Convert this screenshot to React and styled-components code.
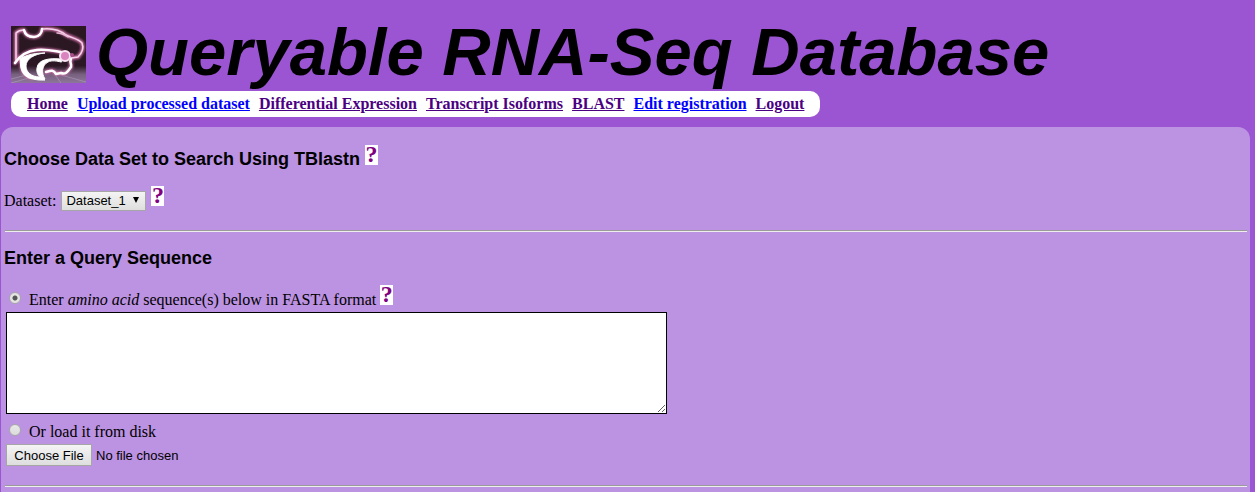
import React from "react";
import styled, { createGlobalStyle } from "styled-components";

const Global = createGlobalStyle`
  * { box-sizing: border-box; }
  html { background: #9b55d3; }
  body {
    margin: 0;
    background: #9b55d3;
    color: #000;
    font: 16px/20px "Liberation Serif", serif;
  }
`;

const Page = styled.div`
  min-height: 100vh;
  display: flex;
  flex-direction: column;
  padding: 13px 5px 0 1px;
  overflow: hidden;
`;

const Header = styled.header`
  display: flex;
  flex-direction: column;
  align-items: flex-start;
  padding-left: 10px;
`;

const Brand = styled.div`
  display: flex;
  align-items: flex-end;
  gap: 10px;
  height: 78px;
`;

const Logo = styled.svg`
  width: 75px;
  height: 57px;
  margin-bottom: 8px;
`;

const Title = styled.h1`
  margin: 0;
  font: italic bold 67px/78px "Liberation Sans", sans-serif;
  white-space: nowrap;
`;

const Nav = styled.nav`
  display: flex;
  gap: 9px;
  padding: 3px 16px;
  border-radius: 10px;
  background: #fff;
  font-weight: bold;
  white-space: nowrap;
`;

const NavLink = styled.a`
  color: ${(p) => (p.$visited ? "#4b0082" : "#0000ff")};
  text-decoration: underline;
`;

const Panel = styled.main`
  flex: 1;
  margin-top: 10px;
  padding: 18px 3px 0;
  border-radius: 12px 12px 0 0;
  background: #bc92e2;
`;

const Heading = styled.h2`
  margin: 0;
  font: bold 18px/20px "Liberation Sans", sans-serif;
`;

const Row = styled.div`
  display: flex;
  align-items: flex-end;
  gap: ${(p) => p.$gap || 0}px;
  margin-top: ${(p) => p.$top || 0}px;
`;

const Help = styled.button`
  width: 13px;
  height: 20px;
  margin-bottom: ${(p) => (p.$inHeading ? 4 : 5)}px;
  padding: 0 0 1px;
  border: 0;
  background: #fff;
  color: #800080;
  font: bold 24px/19px "Liberation Serif", serif;
  text-align: center;
  cursor: help;
`;

const SelectWrap = styled.span`
  position: relative;
  display: inline-flex;
`;

const Select = styled.select`
  appearance: none;
  width: 85px;
  height: 20px;
  padding: 0 4px;
  border: 1px solid #a6a6a6;
  border-radius: 0;
  background: linear-gradient(#f4f4f4, #dedede);
  color: #000;
  font: 13px/18px "Liberation Sans", sans-serif;
`;

const Arrow = styled.svg`
  position: absolute;
  top: 6px;
  right: 7px;
  width: 6px;
  height: 7px;
  pointer-events: none;
`;

const Rule = styled.hr`
  height: 2px;
  margin: ${(p) => p.$top}px 0 0 1px;
  border: 0;
  border-top: 1px solid #9a9a9a;
  border-bottom: 1px solid #eee;
`;

const Radio = styled.input`
  appearance: none;
  width: 12px;
  height: 12px;
  margin: 0 8px 6px 5px;
  border: 1px solid #a8a8a8;
  border-radius: 50%;
  background: linear-gradient(#e8e8e8, #dcdcdc);
  &:checked {
    background: radial-gradient(circle, #555 0 2px, #e4e4e4 3px);
  }
`;

const RadioLabel = styled.label`
  margin-right: 4px;
`;

const Sequence = styled.textarea`
  display: block;
  width: 661px;
  max-width: 100%;
  height: 102px;
  margin: 2px 0 0 2px;
  padding: 2px;
  border: 1px solid #000;
  background: #fff;
  font: 13px/15px "Liberation Mono", monospace;
  resize: both;
`;

const FileInput = styled.input`
  display: block;
  height: 22px;
  margin: 2px 0 0 2px;
  color: #000;
  font: 13px/22px "Liberation Sans", sans-serif;
  &::file-selector-button {
    width: 86px;
    height: 22px;
    margin: 0 4px 0 0;
    padding: 1px 0 0;
    border: 1px solid #a6a6a6;
    border-radius: 0;
    background: linear-gradient(#f4f4f4, #dedede);
    color: #000;
    font: 13px/20px "Liberation Sans", sans-serif;
  }
`;

const links = [
  ["Home", true],
  ["Upload processed dataset", false],
  ["Differential Expression", true],
  ["Transcript Isoforms", true],
  ["BLAST", true],
  ["Edit registration", false],
  ["Logout", true],
];

const HelpButton = ({ topic, inHeading }) => (
  <Help type="button" $inHeading={inHeading} aria-label={`Help: ${topic}`}>?</Help>
);

const head =
  "M5 36V7C7 5 10 4 13 4C14 9 18 11 23 11C28 11 31 7 31 3C40 2 49 4 55 9C61 12 68 13 71 17C73 22 71 27 67 31L60 32";
const neck =
  "M4 37C8 31 15 25 26 24C35 23 43 25 50 26M12 32C8 41 12 50 21 52";
const jaw =
  "M60 33C58 36 61 38 60 41C57 45 55 49 50 47L45 48C42 43 39 45 35 46";
const curl =
  "M9 33C16 28 26 27 34 27C23 28 15 33 15 40C15 46 20 51 29 51L34 54C17 55 9 48 9 33Z M50 33C39 32 27 33 26 42C25 47 28 52 34 53C30 47 31 39 37 36C41 34 46 35 50 36Z";

const WildcatLogo = () => (
  <Logo viewBox="0 0 75 57" role="img" aria-label="Wildcat logo">
    <defs>
      <linearGradient id="floor" x1="0" y1="0" x2="0" y2="1">
        <stop offset="0" stopColor="#2b1720" />
        <stop offset="0.7" stopColor="#2c1825" />
        <stop offset="0.85" stopColor="#78617f" />
        <stop offset="1" stopColor="#8d7699" />
      </linearGradient>
      <filter id="glow"><feGaussianBlur stdDeviation="1" /></filter>
    </defs>
    <rect width="75" height="57" fill="url(#floor)" />
    <path d="M0 53L20 48M0 57L25 50M50 49L75 56M45 50L50 57" stroke="#b9a6c0" strokeWidth="0.5" />
    <g fill="none" strokeLinecap="round" strokeLinejoin="round">
      <path d={head + neck + jaw} stroke="#c96da6" strokeWidth="4" filter="url(#glow)" />
      <path d={head} stroke="#f3d3e7" strokeWidth="1.5" />
      <path d={neck + jaw} stroke="#fff" strokeWidth="2.5" />
      <path d={curl} fill="#fff" stroke="#fff" strokeWidth="1" />
      <path d="M13 4C14 9 18 11 23 11C28 11 31 7 31 3" stroke="#fff" strokeWidth="2.5" />
      <path d="M46 7C51 7 54 9 57 11" stroke="#e9b7d6" strokeWidth="1.5" />
    </g>
    <circle cx="54" cy="30" r="5" fill="#d983bf" stroke="#fbe3f3" strokeWidth="2" />
    <circle cx="61" cy="29" r="2" fill="#a8508c" />
  </Logo>
);

export default function App() {
  return (
    <>
      <Global />
      <Page>
        <Header>
          <Brand>
            <WildcatLogo />
            <Title>Queryable RNA-Seq Database</Title>
          </Brand>
          <Nav>
            {links.map(([label, visited]) => (
              <NavLink key={label} href="#" $visited={visited}>{label}</NavLink>
            ))}
          </Nav>
        </Header>
        <Panel>
          <Row $gap={5}>
            <Heading>Choose Data Set to Search Using TBlastn</Heading>
            <HelpButton inHeading topic="data set search" />
          </Row>
          <Row $top={17} $gap={5}>
            <label htmlFor="dataset">Dataset:</label>
            <SelectWrap>
              <Select id="dataset" defaultValue="Dataset_1">
                <option>Dataset_1</option>
              </Select>
              <Arrow viewBox="0 0 6 7" aria-hidden="true"><path d="M0 0h6L3 6z" /></Arrow>
            </SelectWrap>
            <HelpButton topic="dataset" />
          </Row>
          <Rule $top={19} />
          <Row $top={16}>
            <Heading>Enter a Query Sequence</Heading>
          </Row>
          <Row $top={17}>
            <Radio type="radio" name="source" id="typed" defaultChecked />
            <RadioLabel htmlFor="typed">
              Enter <em>amino acid</em> sequence(s) below in FASTA format
            </RadioLabel>
            <HelpButton topic="FASTA format" />
          </Row>
          <Sequence aria-label="Query sequence" />
          <Row $top={8}>
            <Radio type="radio" name="source" id="disk" />
            <RadioLabel htmlFor="disk">Or load it from disk</RadioLabel>
          </Row>
          <FileInput type="file" aria-label="Sequence file" />
          <Rule $top={19} />
        </Panel>
      </Page>
    </>
  );
}
